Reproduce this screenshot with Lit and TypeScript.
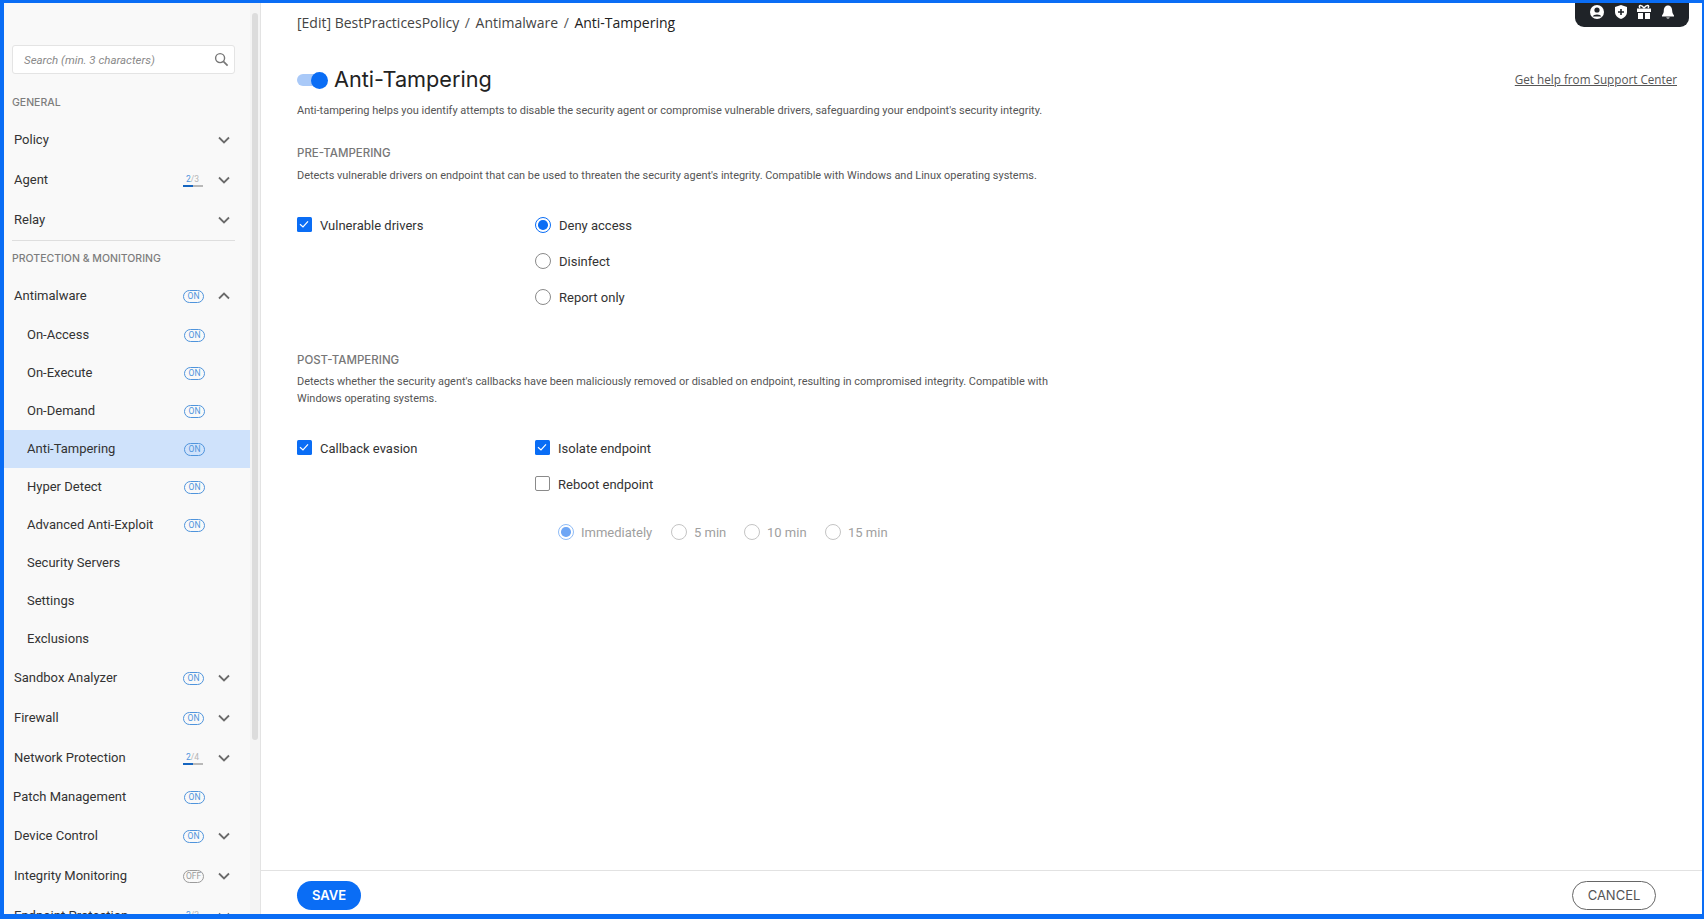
import { LitElement, html, css, svg } from "lit";
import { customElement } from "lit/decorators.js";

type Item = { t: string; b?: "on" | "off" | string; c?: "down" | "up"; sub?: boolean; sel?: boolean; tight?: boolean };

const general: Item[] = [
  { t: "Policy", c: "down" },
  { t: "Agent", b: "2/3", c: "down" },
  { t: "Relay", c: "down" },
];
const protection: Item[] = [
  { t: "Antimalware", b: "on", c: "up" },
  { t: "On-Access", b: "on", sub: true },
  { t: "On-Execute", b: "on", sub: true },
  { t: "On-Demand", b: "on", sub: true },
  { t: "Anti-Tampering", b: "on", sub: true, sel: true },
  { t: "Hyper Detect", b: "on", sub: true },
  { t: "Advanced Anti-Exploit", b: "on", sub: true },
  { t: "Security Servers", sub: true },
  { t: "Settings", sub: true },
  { t: "Exclusions", sub: true },
  { t: "Sandbox Analyzer", b: "on", c: "down" },
  { t: "Firewall", b: "on", c: "down" },
  { t: "Network Protection", b: "2/4", c: "down" },
  { t: "Patch Management", b: "on", tight: true },
  { t: "Device Control", b: "on", c: "down" },
  { t: "Integrity Monitoring", b: "off", c: "down" },
  { t: "Endpoint Protection", b: "2/3", c: "down" },
];

const chevron = (dir: "down" | "up") => html`<svg class="chev" viewBox="0 0 12 8" width="12" height="8">
  <path d=${dir === "down" ? "M1 1.5 L6 6.5 L11 1.5" : "M1 6.5 L6 1.5 L11 6.5"} fill="none" stroke="#6b6b6b" stroke-width="1.8" />
</svg>`;

const check = svg`<path d="M3 7.2 L6 10 L11 4.4" fill="none" stroke="#fff" stroke-width="1.2"/>`;

@customElement("app-root")
export class AppRoot extends LitElement {
  static styles = css`
    :host { display: block; height: 921px; width: 1704px; overflow: hidden; background: #fff;
      font-family: Roboto, "Noto Sans", sans-serif; color: #333; }
    * { box-sizing: border-box; }
    .frame { height: 919px; width: 1704px; border-style: solid; border-color: #0a6df5;
      border-width: 3px 2px 5px 4px; display: flex; background: #fff; overflow: hidden; }
    .side { width: 246px; flex: none; background: #f9f9f9; overflow: hidden; height: 100%; }
    .bar { width: 11px; flex: none; background: #f4f4f4; border-right: 1px solid #e3e3e3; padding: 10px 2px 0 2px; }
    .thumb { width: 6px; height: 727px; background: #dcdcdc; border-radius: 3px; }
    .search { margin: 42px 0 0 8px; width: 223px; height: 29px; background: #fff; border: 1px solid #e4e4e4; border-radius: 3px;
      display: flex; align-items: center; justify-content: space-between; padding: 0 5px 0 11px; }
    .search span { font-size: 11.5px; font-style: italic; color: #8a8a8a; }
    .group { font-family: Inter, "Open Sans", sans-serif; font-size: 10.5px; font-weight: 500; color: #7d7d7d; padding-left: 8px; white-space: nowrap; }
    .g1 { height: 46px; padding-top: 19px; line-height: 20px; }
    .g2 { height: 36px; line-height: 35px; border-top: 1px solid #dedede; margin-left: 8px; width: 223px; padding-left: 0; }
    .row { height: 40px; display: flex; align-items: center; padding-left: 10px; font-size: 13px; color: #333; position: relative; }
    .row.sub { height: 38px; padding-left: 23px; }
    .row.tight { height: 38px; padding-left: 9px; }
    .row.sel { background: #cfe2fb; }
    .label { flex: 1; white-space: nowrap; padding-bottom: 1px; }
    .row .right { position: absolute; left: 179px; top: 0; bottom: 0; display: flex; align-items: center; }
    .row.sub .right, .row.tight .right { left: 180px; }
    .chev { position: absolute; left: 214px; top: 50%; margin-top: -4px; }
    .pill { width: 21px; height: 13px; border: 1px solid #4f94dc; border-radius: 7px; font-size: 8.5px; line-height: 11px; text-align: center; color: #4f94dc; }
    .pill.off { border-color: #9b9b9b; color: #9b9b9b; }
    .prog { width: 20px; height: 13px; border-bottom: 2px solid #b9b9b9; font-size: 8.5px; line-height: 10px; color: #b5b5b5; position: relative; padding-left: 3px; }
    .prog b { font-weight: 400; color: #4f94dc; }
    .prog i { position: absolute; left: 0; bottom: -2px; height: 2px; width: 10px; background: #1565c0; }
    .main { flex: 1; display: flex; flex-direction: column; position: relative; min-width: 0; }
    .content { flex: 1; padding: 0 25px 0 36px; min-height: 0; }
    .crumbs { height: 40px; line-height: 40px; font-family: "Open Sans", sans-serif; font-size: 14px; color: #444; white-space: nowrap; }
    .crumbs .sep { padding: 0 5.6px; color: #555; }
    .crumbs .cur { color: #222; }
    .head { margin-top: 16px; height: 40px; display: flex; align-items: center; }
    .toggle { width: 31px; height: 17px; position: relative; flex: none; margin: 2px 6px 0 0; }
    .toggle::before { content: ""; position: absolute; left: 0; top: 2.5px; width: 26px; height: 12px; border-radius: 6px; background: #a9c9f8; }
    .toggle::after { content: ""; position: absolute; right: 0; top: 0; width: 17px; height: 17px; border-radius: 50%; background: #0a6df5; }
    h1 { margin: 0; font-family: Inter, sans-serif; font-size: 21.7px; font-weight: 400; color: #222; flex: 1; white-space: nowrap; }
    .help { font-family: "Open Sans", sans-serif; font-size: 11.7px; color: #555; text-decoration: underline; white-space: nowrap; }
    .lead { margin-top: 2px; font-size: 11px; line-height: 20px; color: #555; white-space: nowrap; }
    h2 { margin: 22px 0 0; font-family: Inter, sans-serif; font-size: 11.5px; line-height: 20px; font-weight: 500; color: #777; white-space: nowrap; }
    h2.post { margin-top: 35px; }
    .desc { margin-top: 4px; font-size: 10.95px; line-height: 17px; color: #555; white-space: nowrap; }
    .desc.post { margin-top: 3px; }
    .opts { display: grid; grid-template-columns: 238px 1fr; margin-top: 23px; }
    .opts.post { margin-top: 23px; }
    .opt { height: 36px; display: flex; align-items: center; font-size: 13px; color: #333; white-space: nowrap; }
    .opts .col .tx { margin-left: 8px; }
    .box { width: 15px; height: 15px; flex: none; display: block; margin-top: -1px; }
    .radio { width: 16.5px; height: 16.5px; border-radius: 50%; border: 1px solid #8a8a8a; flex: none; background: #fff; position: relative; margin-left: -0.5px; }
    .radio.on { border-color: #0a6df5; }
    .radio.on::after { content: ""; position: absolute; inset: 2.5px; border-radius: 50%; background: #0a6df5; }
    .rtx { margin-top: 1px; }
    .timing { margin-top: 12px; padding-left: 23px; height: 36px; display: flex; align-items: center; font-size: 13px; color: #a0a0a0; }
    .timing .radio { border-color: #c4c4c4; }
    .timing .radio.on { border-color: #8fbcf7; }
    .timing .radio.on::after { background: #6ea6f5; }
    .opts .col .timing .tx { margin-left: 7px; white-space: nowrap; }
    .t1 { width: 113px; display: flex; align-items: center; }
    .t2 { width: 73px; display: flex; align-items: center; }
    .t3 { width: 81px; display: flex; align-items: center; }
    .t4 { display: flex; align-items: center; }
    .foot { height: 44px; flex: none; border-top: 1px solid #e2e2e2; display: flex; justify-content: space-between; align-items: flex-start; padding: 10px 46px 0 36px; }
    .btn { height: 29px; border-radius: 15px; font-family: Inter, sans-serif; font-size: 13px; font-weight: 600; display: flex; align-items: center; justify-content: center; padding-bottom: 1px; }
    .save { width: 64px; background: #0a6df5; color: #fff; }
    .cancel { width: 84px; border: 1px solid #666; color: #555; font-weight: 400; background: #fff; }
    .top { position: absolute; top: 0; right: 13px; width: 114px; height: 24px; background: #1f2328; border-radius: 0 0 9px 9px;
      display: flex; align-items: flex-start; padding: 1px 0 0 14px; gap: 7.6px; }
    .top svg { display: block; }
  `;

  private badge(b?: string) {
    if (!b) return "";
    if (b === "on" || b === "off") return html`<div class="pill ${b === "off" ? "off" : ""}">${b.toUpperCase()}</div>`;
    const [n, d] = b.split("/");
    return html`<div class="prog"><b>${n}</b>/${d}<i></i></div>`;
  }

  private row(i: Item) {
    return html`<div class="row ${i.sub ? "sub" : ""} ${i.sel ? "sel" : ""} ${i.tight ? "tight" : ""}">
      <span class="label">${i.t}</span>
      ${i.b ? html`<div class="right">${this.badge(i.b)}</div>` : ""}
      ${i.c ? chevron(i.c) : ""}
    </div>`;
  }

  private cb(on: boolean) {
    return html`<svg class="box" viewBox="0 0 15 15">
      ${on
        ? svg`<rect width="15" height="15" rx="1.5" fill="#0a6df5"/>${check}`
        : svg`<rect x=".5" y=".5" width="14" height="14" rx="1.5" fill="#fff" stroke="#8a8a8a"/>`}
    </svg>`;
  }

  render() {
    return html`<div class="frame">
      <aside class="side">
        <div class="search">
          <span>Search (min. 3 characters)</span>
          <svg viewBox="0 0 16 16" width="15" height="15">
            <circle cx="6.5" cy="6.5" r="4.8" fill="none" stroke="#777" stroke-width="1.5" />
            <path d="M10 10 L14.5 14.5" stroke="#777" stroke-width="1.8" />
          </svg>
        </div>
        <div class="group g1">GENERAL</div>
        ${general.map((i) => this.row(i))}
        <div class="group g2">PROTECTION &amp; MONITORING</div>
        ${protection.map((i) => this.row(i))}
      </aside>
      <div class="bar"><div class="thumb"></div></div>
      <main class="main">
        <div class="content">
          <div class="crumbs">[Edit] BestPracticesPolicy<span class="sep">/</span>Antimalware<span class="sep">/</span><span class="cur">Anti-Tampering</span></div>
          <div class="head">
            <div class="toggle"></div>
            <h1>Anti-Tampering</h1>
            <span class="help">Get help from Support Center</span>
          </div>
          <div class="lead">Anti-tampering helps you identify attempts to disable the security agent or compromise vulnerable drivers, safeguarding your endpoint's security integrity.</div>
          <h2>PRE-TAMPERING</h2>
          <div class="desc">Detects vulnerable drivers on endpoint that can be used to threaten the security agent's integrity. Compatible with Windows and Linux operating systems.</div>
          <div class="opts">
            <div class="col"><div class="opt">${this.cb(true)}<span class="tx">Vulnerable drivers</span></div></div>
            <div class="col">
              <div class="opt"><span class="radio on"></span><span class="tx rtx">Deny access</span></div>
              <div class="opt"><span class="radio"></span><span class="tx rtx">Disinfect</span></div>
              <div class="opt"><span class="radio"></span><span class="tx rtx">Report only</span></div>
            </div>
          </div>
          <h2 class="post">POST-TAMPERING</h2>
          <div class="desc post">Detects whether the security agent's callbacks have been maliciously removed or disabled on endpoint, resulting in compromised integrity. Compatible with<br />Windows operating systems.</div>
          <div class="opts post">
            <div class="col"><div class="opt">${this.cb(true)}<span class="tx">Callback evasion</span></div></div>
            <div class="col">
              <div class="opt">${this.cb(true)}<span class="tx">Isolate endpoint</span></div>
              <div class="opt">${this.cb(false)}<span class="tx">Reboot endpoint</span></div>
              <div class="timing">
                <div class="t1"><span class="radio on"></span><span class="tx">Immediately</span></div>
                <div class="t2"><span class="radio"></span><span class="tx">5 min</span></div>
                <div class="t3"><span class="radio"></span><span class="tx">10 min</span></div>
                <div class="t4"><span class="radio"></span><span class="tx">15 min</span></div>
              </div>
            </div>
          </div>
        </div>
        <div class="foot">
          <div class="btn save">SAVE</div>
          <div class="btn cancel">CANCEL</div>
        </div>
        <div class="top">
          <svg viewBox="0 0 16 16" width="16" height="16">
            <circle cx="8" cy="8" r="7" fill="#fff" />
            <circle cx="8" cy="6" r="2.6" fill="#1f2328" />
            <path d="M3.6 12.5 C4.5 9.8 11.5 9.8 12.4 12.5 Z" fill="#1f2328" />
          </svg>
          <svg viewBox="0 0 16 16" width="16" height="16">
            <path d="M8 1 L14 3 V8 C14 11.5 11 14 8 15 C5 14 2 11.5 2 8 V3 Z" fill="#fff" />
            <path d="M8 5 V11 M5 8 H11" stroke="#1f2328" stroke-width="1.6" />
          </svg>
          <svg viewBox="0 0 16 16" width="16" height="16">
            <path d="M1 4.5 H15 V8 H1 Z M2 9 H7 V15 H2 Z M9 9 H14 V15 H9 Z" fill="#fff" />
            <path d="M8 4 C5 0 2 1.5 4 4 M8 4 C11 0 14 1.5 12 4" fill="none" stroke="#fff" stroke-width="1.5" />
          </svg>
          <svg viewBox="0 0 16 16" width="16" height="16">
            <path d="M8 1.5 C11 1.5 12.2 4 12.2 7 C12.2 9.5 13.5 10.5 14 11.5 V12.5 H2 V11.5 C2.5 10.5 3.8 9.5 3.8 7 C3.8 4 5 1.5 8 1.5 Z M6.3 13.5 H9.7 C9.5 14.8 6.5 14.8 6.3 13.5 Z" fill="#fff" />
          </svg>
        </div>
      </main>
    </div>`;
  }
}
